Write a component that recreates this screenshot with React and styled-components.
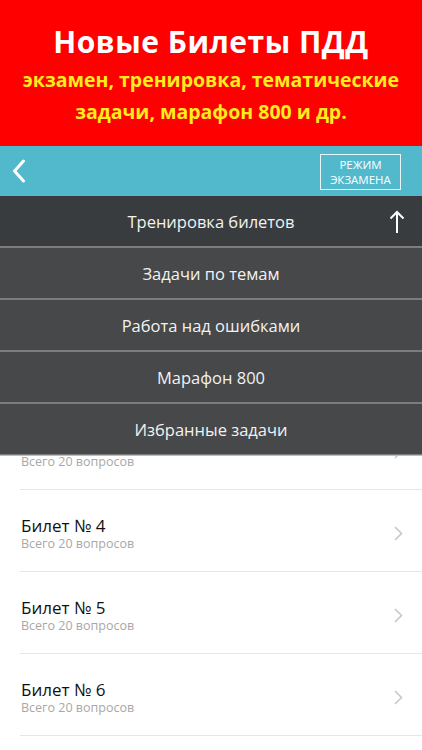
import React from "react";
import styled, { createGlobalStyle } from "styled-components";

const Global = createGlobalStyle`
  html, body { margin: 0; padding: 0; background: #fff; }
  body { font-family: "Open Sans", "Noto Sans", sans-serif; }
  * { box-sizing: border-box; }
`;

const Page = styled.div`
  width: 422px;
  height: 750px;
  overflow: hidden;
  display: flex;
  flex-direction: column;
`;

const Banner = styled.div`
  height: 146px;
  flex-shrink: 0;
  background: #fe0000;
  display: flex;
  flex-direction: column;
  align-items: center;
  padding-top: 22px;
`;

const BannerTitle = styled.div`
  color: #fff;
  font-weight: 700;
  font-size: 30px;
  line-height: 40px;
  letter-spacing: 0.5px;
`;

const BannerSub = styled.div`
  color: #ffec1f;
  font-weight: 700;
  font-size: 19.5px;
  line-height: 32px;
  text-align: center;
  margin-top: 2px;
`;

const Header = styled.div`
  height: 50px;
  background: #52b9cc;
  display: flex;
  align-items: center;
  justify-content: space-between;
  padding: 0 21px 0 12px;
  flex-shrink: 0;
`;

const ModeButton = styled.div`
  border: 1px solid #e6f6f9;
  color: #fff;
  font-size: 11.5px;
  line-height: 15px;
  text-align: center;
  padding: 2px 3px;
  width: 81px;
  margin-top: 2px;
`;

const Body = styled.div`
  position: relative;
  flex: 1;
`;

const List = styled.div`
  padding-top: 48px;
`;

const Row = styled.div`
  height: 82px;
  margin-left: 20px;
  border-bottom: 1px solid #e6e6e6;
  display: flex;
  align-items: center;
  justify-content: space-between;
  padding: 6px 19px 0 1px;
`;

const RowText = styled.div`
  display: flex;
  flex-direction: column;
`;

const RowTitle = styled.div`
  font-size: 17px;
  line-height: 20px;
  color: #111;
`;

const RowSub = styled.div`
  font-size: 12.5px;
  line-height: 15px;
  color: #a8a8a8;
`;

const Menu = styled.div`
  position: absolute;
  top: 0;
  left: 0;
  right: 0;
  display: flex;
  flex-direction: column;
  background: #7b7d7e;
  gap: 2px;
  padding-bottom: 1px;
  box-shadow: 0 1px 0 #bbb;
`;

const MenuItem = styled.div`
  height: 50px;
  background: ${(p) => (p.$first ? "#393c3e" : "#464849")};
  color: #f2f2f2;
  font-size: 16.5px;
  display: flex;
  align-items: center;
  justify-content: center;
  position: relative;
`;

const UpArrow = styled.svg`
  position: absolute;
  right: 17px;
  top: 14px;
`;

const Chevron = () => (
  <svg width="9" height="15" viewBox="0 0 9 15">
    <path d="M1 1 L7.5 7.5 L1 14" fill="none" stroke="#c7c7cc" strokeWidth="1.6" />
  </svg>
);

const menu = [
  "Тренировка билетов",
  "Задачи по темам",
  "Работа над ошибками",
  "Марафон 800",
  "Избранные задачи",
];

const tickets = [1, 2, 3, 4, 5, 6];

export default function App() {
  return (
    <Page>
      <Global />
      <Banner>
        <BannerTitle>Новые Билеты ПДД</BannerTitle>
        <BannerSub>
          экзамен, тренировка, тематические
          <br />
          задачи, марафон 800 и др.
        </BannerSub>
      </Banner>
      <Header>
        <svg width="14" height="24" viewBox="0 0 14 24">
          <path d="M11.5 2 L2.5 12 L11.5 22" fill="none" stroke="#fff" strokeWidth="3" strokeLinecap="round" strokeLinejoin="round" />
        </svg>
        <ModeButton>
          РЕЖИМ
          <br />
          ЭКЗАМЕНА
        </ModeButton>
      </Header>
      <Body>
        <List>
          {tickets.map((n) => (
            <Row key={n}>
              <RowText>
                <RowTitle>Билет № {n}</RowTitle>
                <RowSub>Всего 20 вопросов</RowSub>
              </RowText>
              <Chevron />
            </Row>
          ))}
        </List>
        <Menu>
          {menu.map((m, i) => (
            <MenuItem key={m} $first={i === 0}>
              {m}
              {i === 0 && (
                <UpArrow width="16" height="24" viewBox="0 0 16 24">
                  <path d="M8 23 V2 M1.5 8.5 L8 2 L14.5 8.5" fill="none" stroke="#fff" strokeWidth="2" />
                </UpArrow>
              )}
            </MenuItem>
          ))}
        </Menu>
      </Body>
    </Page>
  );
}
